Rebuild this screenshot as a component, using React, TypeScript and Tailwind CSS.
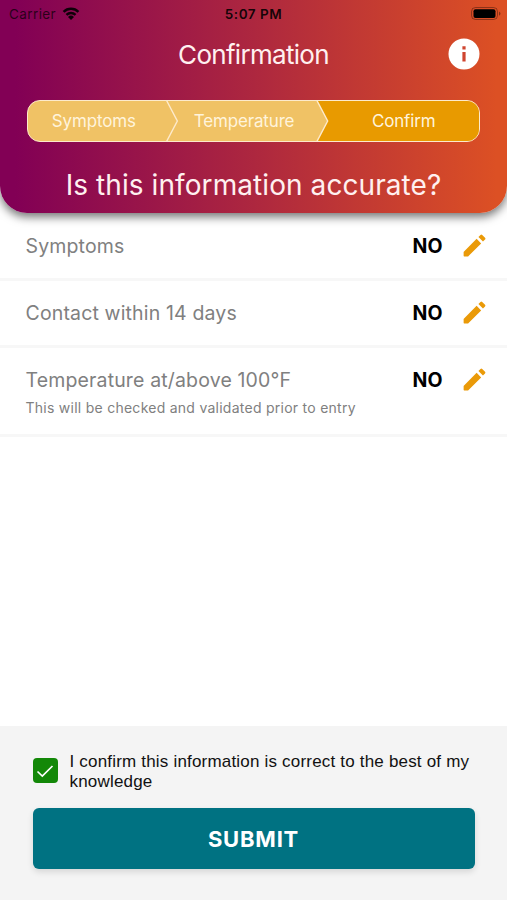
import React from 'react';

interface AnswerRowProps {
  label: string;
  answer: string;
  note?: string;
  className: string;
}

function StatusBar() {
  return (
    <div className="grid h-[27px] grid-cols-3 items-center pl-[9px] pr-[6px] text-[13.5px] text-black/70">
      <div className="flex items-center gap-[6px]">
        <span className="pt-px tracking-[0.4px]">Carrier</span>
        <svg className="h-[13px] w-[18px] text-black/90" viewBox="0 0 18 14" fill="none" stroke="currentColor" strokeWidth="2.6">
          <path d="M1 5.2a11.4 11.4 0 0 1 16 0" />
          <path d="M4.1 8.4a7 7 0 0 1 9.8 0" />
          <path d="M9 14 5.8 10.7a4.6 4.6 0 0 1 6.4 0z" fill="currentColor" stroke="none" />
        </svg>
      </div>
      <span className="-ml-[3px] pt-px text-center font-semibold tracking-[0.5px] text-black/90">5:07 PM</span>
      <svg className="h-[14px] w-[30px] justify-self-end" viewBox="0 0 30 14">
        <rect x="0.5" y="0.5" width="26" height="12" rx="4" fill="none" stroke="#000" strokeOpacity="0.35" />
        <rect x="2.5" y="2.2" width="22" height="8.8" rx="2" fill="#000" />
        <path d="M28 4.5c2 .8 2 3.4 0 4.2z" fill="#000" fillOpacity="0.4" />
      </svg>
    </div>
  );
}

function Steps() {
  return (
    <div className="relative mx-auto flex h-[42px] w-[453px] items-center overflow-hidden rounded-[13px] border-[1.5px] border-[#fdeacb] bg-[#f0c265] text-[17px] tracking-[-0.15px] text-[#fff4dc]">
      <svg className="absolute inset-0 h-full w-full" viewBox="0 0 450 39" preserveAspectRatio="none">
        <path d="M288 -1 299 19.5 288 40H451V-1z" fill="#e89a00" />
        <path d="M138 -1 149 19.5 138 40M288 -1 299 19.5 288 40" fill="none" stroke="#fdeacb" strokeWidth="1.4" />
      </svg>
      <span className="relative w-[132px] pt-[2px] text-center">Symptoms</span>
      <span className="relative w-[169px] pt-[2px] text-center">Temperature</span>
      <span className="relative w-[151px] pt-[2px] text-center">Confirm</span>
    </div>
  );
}

function PencilIcon() {
  return (
    <svg className="-mt-[2px] size-[29px]" viewBox="0 0 24 24" fill="#ea9a08">
      <path d="M3 17.46v3.04c0 .28.22.5.5.5h3.04c.13 0 .26-.05.35-.15L17.5 10.25l-3.75-3.75L3.15 17.1c-.1.1-.15.22-.15.36zM20.71 7.04a.996.996 0 0 0 0-1.41l-2.34-2.34a.996.996 0 0 0-1.41 0l-1.7 1.7 3.75 3.75 1.7-1.7z" />
    </svg>
  );
}

function AnswerRow({ label, answer, note, className }: AnswerRowProps) {
  return (
    <div className={`border-b-[3px] border-[#f7f7f7] pl-[25.5px] pr-[18px] ${className}`}>
      <div className="flex h-[30px] items-center">
        <span className="flex-1 pt-[2px] text-[19.5px] tracking-[0.15px] text-[#808080]">{label}</span>
        <span className="mr-[17.5px] pt-[2px] text-[19.5px] font-bold text-black">{answer}</span>
        <PencilIcon />
      </div>
      {note && <p className="pt-[3px] text-[14px] leading-[20px] tracking-[0.26px] text-[#808080]">{note}</p>}
    </div>
  );
}

export default function App() {
  return (
    <div className="flex h-[900px] w-[507px] flex-col overflow-hidden bg-white font-['Inter',sans-serif]">
      <header className="z-10 h-[213px] shrink-0 rounded-b-[27px] bg-[linear-gradient(90deg,#820055_3%,#ad273f_50%,#dc5024_98%)] shadow-[0_4px_10px_rgba(0,0,0,0.55)]">
        <StatusBar />
        <div className="relative flex h-[54px] items-center justify-center">
          <h1 className="text-[26px] tracking-[-0.7px] text-[#fff0f0]">Confirmation</h1>
          <button className="absolute right-[27px] top-[11px]" aria-label="Information">
            <svg className="size-[32px]" viewBox="0 0 32 32">
              <circle cx="16" cy="16" r="15.5" fill="#fff" />
              <path d="M14.4 8.3h3.2v3.2h-3.2zM14.4 14h3.2v9.5h-3.2z" fill="#cf4530" />
            </svg>
          </button>
        </div>
        <div className="pt-[19px]">
          <Steps />
        </div>
        <h2 className="mt-[23px] text-center text-[28px] leading-[40px] tracking-[0.08px] text-[#fff0f0]">Is this information accurate?</h2>
      </header>

      <main className="flex-1">
        <AnswerRow label="Symptoms" answer="NO" className="h-[68px] pt-[18px]" />
        <AnswerRow label="Contact within 14 days" answer="NO" className="h-[67px] pt-[17px]" />
        <AnswerRow label="Temperature at/above 100°F" answer="NO" note="This will be checked and validated prior to entry" className="h-[89px] pt-[17px]" />
      </main>

      <footer className="h-[174px] bg-[#f4f4f4] px-[32.5px] pt-[25px]">
        <label className="flex items-center gap-[12px]">
          <span className="mt-[-2px] flex size-[25px] shrink-0 items-center justify-center rounded-[4px] bg-[#138808]">
            <svg className="size-[18px]" viewBox="0 0 18 18" fill="none" stroke="#fff" strokeWidth="1.7">
              <path d="M1.5 9.5 6.3 14 16.5 4" />
            </svg>
          </span>
          <span className="whitespace-nowrap pt-px font-['Liberation_Sans',sans-serif] text-[17px] leading-[20px] tracking-[0.19px] text-[#111]">
            I confirm this information is correct to the best of my
            <br />
            knowledge
          </span>
        </label>
        <button className="mt-[16px] flex h-[61px] w-full items-center justify-center rounded-[6px] bg-[#007282] pt-[2px] text-[22px] font-bold tracking-[0.8px] text-white shadow-[0_3px_6px_rgba(0,0,0,0.12)]">
          SUBMIT
        </button>
      </footer>
    </div>
  );
}
